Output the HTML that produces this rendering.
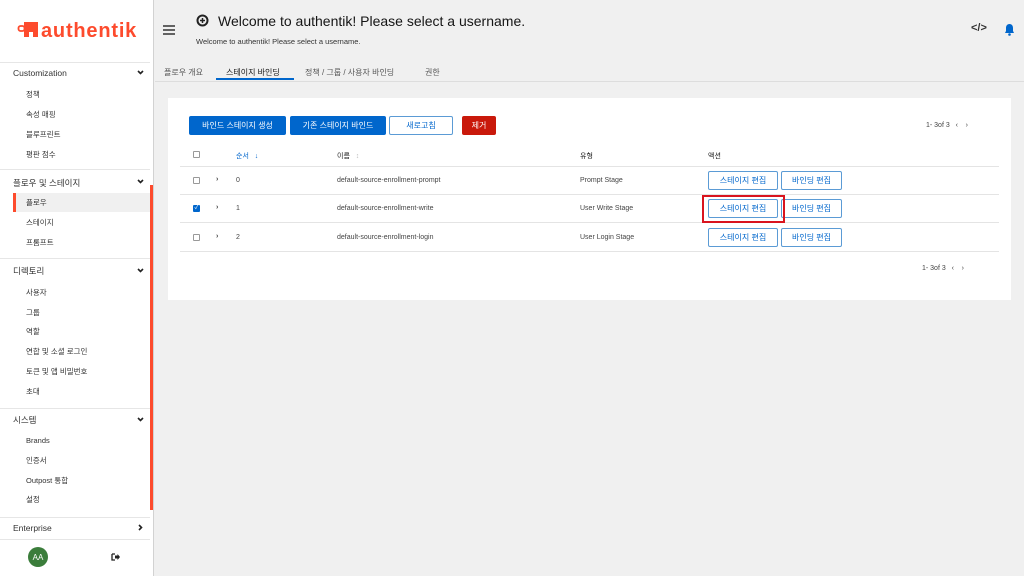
<!DOCTYPE html>
<html><head><meta charset="utf-8"><style>
*{margin:0;padding:0;box-sizing:border-box}
body{width:1024px;height:576px;overflow:hidden;background:#f0f0f0;font-family:"Liberation Sans","Noto Sans CJK KR",sans-serif;color:#151515;position:relative}
.a{position:absolute;white-space:nowrap}
#sb{position:absolute;left:0;top:0;width:154px;height:576px;background:#fff;border-right:1px solid #d2d2d2}
.sec{font-size:8.5px;color:#333}
.it{font-size:7.5px;color:#333;left:26px}
.hr{position:absolute;left:0;width:150px;height:1px;background:#e6e6e6}
.chev{position:absolute;left:137px;width:7px;height:5px}
.btn{position:absolute;height:19px;font-size:8px;display:flex;align-items:center;justify-content:center;border-radius:2px}
.bb{background:#0066cc;color:#fff}
.bo{border:1px solid #5b9bd5;color:#0066cc;background:#fff}
.line{position:absolute;left:180px;width:819px;height:1px;background:#e4e4e4}
.cb{position:absolute;width:7px;height:7px;border:1px solid #999;border-radius:1px;background:#fff}
.td{font-size:7px;color:#444}
</style></head><body>
<div id="sb">
<svg class="a" style="left:17px;top:17px" width="122" height="26" viewBox="0 0 122 26">
<rect x="1.5" y="9" width="6" height="5" rx="2" fill="none" stroke="#fd4b2d" stroke-width="1.8"/>
<path d="M7 5h14v15h-5v-5h-4v5H7z" fill="#fd4b2d"/>
<text x="24" y="20" font-family="Liberation Sans" font-size="20" font-weight="bold" fill="#fd4b2d" letter-spacing="0.8">authentik</text>
</svg>
<div class="hr" style="top:62px"></div>
<div class="a sec" style="left:13px;top:68px">Customization</div><svg class="chev" style="top:70px" viewBox="0 0 7 5"><path d="M1 1l2.5 2.5L6 1" stroke="#222" stroke-width="1.6" fill="none"/></svg>
<div class="a it" style="top:89px">정책</div>
<div class="a it" style="top:109px">속성 매핑</div>
<div class="a it" style="top:129px">블루프린트</div>
<div class="a it" style="top:149px">평판 점수</div>
<div class="hr" style="top:169px"></div>
<div class="a sec" style="left:13px;top:177px">플로우 및 스테이지</div><svg class="chev" style="top:179px" viewBox="0 0 7 5"><path d="M1 1l2.5 2.5L6 1" stroke="#222" stroke-width="1.6" fill="none"/></svg>
<div class="a" style="left:13px;top:193px;width:137px;height:19px;background:#f0f0f0;border-left:3px solid #fd4b2d"></div>
<div class="a it" style="top:197px">플로우</div>
<div class="a it" style="top:217px">스테이지</div>
<div class="a it" style="top:237px">프롬프트</div>
<div class="hr" style="top:258px"></div>
<div class="a sec" style="left:13px;top:265px">디렉토리</div><svg class="chev" style="top:268px" viewBox="0 0 7 5"><path d="M1 1l2.5 2.5L6 1" stroke="#222" stroke-width="1.6" fill="none"/></svg>
<div class="a it" style="top:287px">사용자</div>
<div class="a it" style="top:307px">그룹</div>
<div class="a it" style="top:326px">역할</div>
<div class="a it" style="top:346px">연합 및 소셜 로그인</div>
<div class="a it" style="top:366px">토큰 및 앱 비밀번호</div>
<div class="a it" style="top:386px">초대</div>
<div class="hr" style="top:408px"></div>
<div class="a sec" style="left:13px;top:414px">시스템</div><svg class="chev" style="top:417px" viewBox="0 0 7 5"><path d="M1 1l2.5 2.5L6 1" stroke="#222" stroke-width="1.6" fill="none"/></svg>
<div class="a it" style="top:436px">Brands</div>
<div class="a it" style="top:455px">인증서</div>
<div class="a it" style="top:475px">Outpost 통합</div>
<div class="a it" style="top:494px">설정</div>
<div class="hr" style="top:517px"></div>
<div class="a sec" style="left:13px;top:523px">Enterprise</div><svg class="a" style="left:138px;top:524px" width="5" height="7" viewBox="0 0 5 7"><path d="M1 1l2.5 2.5L1 6" stroke="#222" stroke-width="1.6" fill="none"/></svg>
<div class="hr" style="top:539px"></div>
<div class="a" style="left:28px;top:547px;width:20px;height:20px;border-radius:50%;background:#3b7d3b;color:#fff;font-size:8px;display:flex;align-items:center;justify-content:center">AA</div>
<svg class="a" style="left:111px;top:553px" width="9" height="8" viewBox="0 0 9 8"><path d="M1 1h3M1 1v6h3" stroke="#222" stroke-width="1.3" fill="none"/><path d="M4 2.5h2.5V1L9 4 6.5 7V5.5H4z" fill="#222"/></svg>
<div class="a" style="left:150px;top:185px;width:3px;height:325px;background:#fd4b2d"></div>
</div>
<!-- header -->
<svg class="a" style="left:163px;top:25px" width="12" height="10" viewBox="0 0 12 10"><path d="M0 1h12M0 5h12M0 9h12" stroke="#333" stroke-width="1.5"/></svg>
<svg class="a" style="left:195px;top:13px" width="15" height="15" viewBox="0 0 15 15"><circle cx="7.5" cy="7.5" r="5" fill="none" stroke="#222" stroke-width="2"/><path d="M5 7.5h5M7.5 5v5" stroke="#222" stroke-width="1.5"/></svg>
<div class="a" style="left:218px;top:13px;font-size:14px;color:#151515">Welcome to authentik! Please select a username.</div>
<div class="a" style="left:196px;top:37px;font-size:7.5px;color:#333">Welcome to authentik! Please select a username.</div>
<div class="a" style="left:971px;top:22px;font-size:11px;font-weight:bold;color:#333">&lt;/&gt;</div>
<svg class="a" style="left:1004px;top:23px" width="11" height="13" viewBox="0 0 11 13"><path d="M5.5 1C3 1 2 3 2 5v3L1 10h9L9 8V5c0-2-1-4-3.5-4z" fill="#0066cc"/><circle cx="5.5" cy="11.5" r="1.3" fill="#0066cc"/></svg>
<div class="a" style="left:164px;top:67px;font-size:8px;color:#555">플로우 개요</div>
<div class="a" style="left:226px;top:67px;font-size:8px;color:#151515">스테이지 바인딩</div>
<div class="a" style="left:216px;top:78px;width:78px;height:2px;background:#0066cc"></div>
<div class="a" style="left:305px;top:67px;font-size:8px;color:#555">정책 / 그룹 / 사용자 바인딩</div>
<div class="a" style="left:425px;top:67px;font-size:8px;color:#555">권한</div>
<div class="a" style="left:155px;top:81px;width:869px;height:1px;background:#ddd"></div>
<!-- card -->
<div class="a" style="left:168px;top:98px;width:843px;height:202px;background:#fff"></div>
<div class="btn bb" style="left:189px;top:116px;width:97px">바인드 스테이지 생성</div>
<div class="btn bb" style="left:290px;top:116px;width:96px">기존 스테이지 바인드</div>
<div class="btn bo" style="left:389px;top:116px;width:64px">새로고침</div>
<div class="btn" style="left:462px;top:116px;width:34px;background:#c9190b;color:#fff">제거</div>
<div class="a td" style="left:926px;top:122px">1- 3of 3 &nbsp;&nbsp;‹ &nbsp;&nbsp;&nbsp;›</div>
<div class="cb" style="left:193px;top:151px"></div>
<div class="a" style="left:236px;top:151px;font-size:7px;color:#0066cc">순서 &nbsp;&nbsp;↓</div>
<div class="a td" style="left:337px;top:151px;color:#222">이름 &nbsp;&nbsp;<span style="color:#bbb">↕</span></div>
<div class="a td" style="left:580px;top:151px;color:#222">유형</div>
<div class="a td" style="left:708px;top:151px;color:#222">액션</div>
<div class="line" style="top:166px"></div>
<div class="line" style="top:194px"></div>
<div class="line" style="top:222px"></div>
<div class="line" style="top:251px"></div>
<div class="cb" style="left:193px;top:177px"></div>
<div class="a" style="left:193px;top:205px;width:7px;height:7px;background:#0066cc;border-radius:1px;color:#fff;font-size:6px;line-height:7px;text-align:center">✓</div>
<div class="cb" style="left:193px;top:234px"></div>
<div class="a td" style="left:216px;top:176px;font-weight:bold">›</div><div class="a td" style="left:216px;top:204px;font-weight:bold">›</div><div class="a td" style="left:216px;top:233px;font-weight:bold">›</div>
<div class="a td" style="left:236px;top:177px">0</div><div class="a td" style="left:236px;top:205px">1</div><div class="a td" style="left:236px;top:234px">2</div>
<div class="a td" style="left:337px;top:177px">default-source-enrollment-prompt</div>
<div class="a td" style="left:337px;top:205px">default-source-enrollment-write</div>
<div class="a td" style="left:337px;top:234px">default-source-enrollment-login</div>
<div class="a td" style="left:580px;top:177px">Prompt Stage</div>
<div class="a td" style="left:580px;top:205px">User Write Stage</div>
<div class="a td" style="left:580px;top:234px">User Login Stage</div>
<div class="btn bo" style="left:708px;top:171px;width:70px">스테이지 편집</div>
<div class="btn bo" style="left:781px;top:171px;width:61px">바인딩 편집</div>
<div class="btn bo" style="left:708px;top:199px;width:70px">스테이지 편집</div>
<div class="btn bo" style="left:781px;top:199px;width:61px">바인딩 편집</div>
<div class="btn bo" style="left:708px;top:228px;width:70px">스테이지 편집</div>
<div class="btn bo" style="left:781px;top:228px;width:61px">바인딩 편집</div>
<div class="a" style="left:702px;top:195px;width:83px;height:28px;border:2px solid #d9141e"></div>
<div class="a td" style="left:922px;top:265px">1- 3of 3 &nbsp;&nbsp;‹ &nbsp;&nbsp;&nbsp;›</div>
</body></html>
